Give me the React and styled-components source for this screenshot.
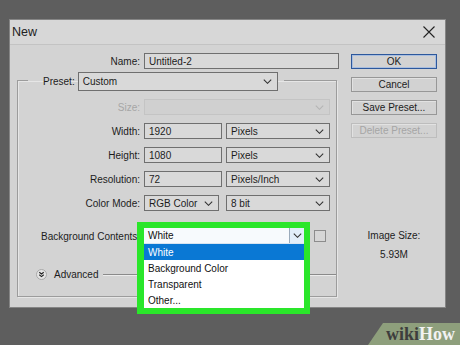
import styled, { createGlobalStyle } from "styled-components";

const GlobalStyle = createGlobalStyle`
  html, body {
    margin: 0;
    padding: 0;
  }
  body {
    font-family: "Liberation Sans", Arial, sans-serif;
  }
`;

const Desktop = styled.div`
  position: relative;
  width: 460px;
  height: 345px;
  box-sizing: border-box;
  padding: 19px 0 0 9px;
  background: #5e5e5e;
  overflow: hidden;
`;

const Dialog = styled.div`
  width: 437px;
  height: 289px;
  box-sizing: border-box;
  display: flex;
  flex-direction: column;
  background: #d3d3d3;
  border: 1px solid #858585;
  color: #1c1c1c;
  font-size: 10px;
`;

const TitleBar = styled.div`
  height: 25px;
  box-sizing: border-box;
  display: flex;
  align-items: center;
  justify-content: space-between;
  padding: 0 10px 0 2px;
  background: #d7d7d7;
  border-bottom: 1px solid #c3c3c3;
  font-size: 12.5px;
  color: #222;
`;

const Body = styled.div`
  display: flex;
  gap: 13px;
  padding: 8px 8px 0 7px;
`;

const LeftCol = styled.div`
  width: 321px;
  display: flex;
  flex-direction: column;
`;

const RightCol = styled.div`
  width: 86px;
  display: flex;
  flex-direction: column;
  gap: 8px;
  padding-top: 1px;
`;

const Row = styled.div`
  display: grid;
  grid-template-columns: ${({ $label }) => $label}px 1fr;
  column-gap: 4px;
  align-items: center;
  height: 16px;
  margin-top: ${({ $mt }) => $mt || 0}px;
`;

const Label = styled.div`
  text-align: right;
  white-space: nowrap;
  color: ${({ $disabled }) => ($disabled ? "#a6a6a6" : "#1c1c1c")};
`;

const Controls = styled.div`
  display: flex;
  align-items: center;
  gap: ${({ $gap }) => $gap || 4}px;
`;

const Field = styled.div`
  width: ${({ $w }) => $w}px;
  height: ${({ $h }) => $h || 16}px;
  box-sizing: border-box;
  display: flex;
  align-items: center;
  justify-content: space-between;
  padding: 0 5px 0 4px;
  background: ${({ $disabled }) => ($disabled ? "#d0d0d0" : "#d9d9d9")};
  border: 1px solid ${({ $disabled }) => ($disabled ? "#c4c4c4" : "#6f6f6f")};
  color: #1c1c1c;
  white-space: nowrap;
`;

const Group = styled.fieldset`
  width: 320px;
  box-sizing: border-box;
  margin: 0;
  min-width: 0;
  padding: 8px 0 15px 0;
  border: 1px solid #9c9c9c;
  box-shadow: inset 1px 1px 0 #e6e6e6, 1px 1px 0 #e6e6e6;
`;

const Legend = styled.legend`
  margin-left: 10px;
  padding: 3px 6px 0 15px;
  display: flex;
  align-items: center;
  gap: 3px;
`;

const Slot = styled.div`
  position: relative;
  width: 160px;
  height: 16px;
`;

const Callout = styled.div`
  position: absolute;
  z-index: 2;
  top: -6px;
  left: -7px;
  width: 173px;
  box-sizing: border-box;
  border-style: solid;
  border-color: #2ae62a;
  border-width: 6px 6px 6px 7px;
  background: #ffffff;
`;

const SelectBox = styled.div`
  height: 16px;
  box-sizing: border-box;
  display: flex;
  align-items: center;
  justify-content: space-between;
  padding-left: 4px;
  background: #f7fafd;
  border-bottom: 1px solid #d8e4f0;
  color: #111;
`;

const SelectArrow = styled.div`
  width: 14px;
  height: 15px;
  display: flex;
  align-items: center;
  justify-content: center;
  background: #e2eefa;
  border-left: 1px solid #9aaabb;
`;

const Option = styled.div`
  height: 16px;
  display: flex;
  align-items: center;
  padding-left: 4px;
  background: ${({ $active }) => ($active ? "#0a78d4" : "transparent")};
  color: ${({ $active }) => ($active ? "#ffffff" : "#111")};
`;

const Swatch = styled.div`
  width: 12px;
  height: 12px;
  box-sizing: border-box;
  margin-left: 6px;
  border: 1px solid #8c8c8c;
  background: #d6d6d6;
`;

const AdvancedRow = styled.div`
  width: 318px;
  box-sizing: border-box;
  display: grid;
  grid-template-columns: 11px auto 1fr;
  column-gap: 7px;
  align-items: center;
  height: 14px;
  margin-top: 23px;
  padding-left: 18px;
`;

const Rule = styled.div`
  height: 1px;
  margin-left: -2px;
  background: #8a8a8a;
  box-shadow: 0 1px 0 #ececec;
`;

const Button = styled.div`
  height: 15px;
  box-sizing: border-box;
  display: flex;
  align-items: center;
  justify-content: center;
  background: #d2d2d2;
  border: 1px solid ${({ $primary, $disabled }) =>
    $primary ? "#2d589c" : $disabled ? "#bdbdbd" : "#979797"};
  box-shadow: ${({ $primary }) =>
    $primary ? "inset 0 0 0 1px #a9bedf" : "inset 1px 1px 0 #e2e2e2"};
  color: ${({ $disabled }) => ($disabled ? "#a5a5a5" : "#1c1c1c")};
`;

const SizeInfo = styled.div`
  margin-top: 84px;
  display: flex;
  flex-direction: column;
  align-items: center;
  gap: 7px;
  line-height: 12px;
  color: #1c1c1c;
`;

const Badge = styled.div`
  position: absolute;
  right: 0;
  bottom: 0;
  width: 92px;
  height: 22px;
  box-sizing: border-box;
  padding: 1px 0 0 18px;
  background: #8e9f7c;
  clip-path: polygon(15px 0, 100% 0, 100% 100%, 0 100%);
  font-family: "Liberation Serif", "Times New Roman", serif;
  font-weight: bold;
  font-size: 18px;
  line-height: 21px;
  white-space: nowrap;
`;

const Wiki = styled.span`
  color: #3d3d3d;
`;

const How = styled.span`
  color: #f2f2f2;
`;

function Chevron({ color = "#333" }) {
  return (
    <svg width="9" height="5" viewBox="0 0 9 5">
      <path d="M0.8 0.7 L4.5 4.3 L8.2 0.7" fill="none" stroke={color} strokeWidth="1.1" />
    </svg>
  );
}

function Dropdown({ w, value, disabled, h }) {
  return (
    <Field $w={w} $h={h} $disabled={disabled}>
      <span>{value}</span>
      <Chevron color={disabled ? "#b5b5b5" : "#333"} />
    </Field>
  );
}

function CloseIcon() {
  return (
    <svg width="12" height="12" viewBox="0 0 12 12">
      <path d="M0.5 0.5 L11.5 11.5 M11.5 0.5 L0.5 11.5" stroke="#222" strokeWidth="1.1" />
    </svg>
  );
}

function AdvancedIcon() {
  return (
    <svg width="11" height="11" viewBox="0 0 11 11">
      <circle cx="5.5" cy="5.5" r="5" fill="#e4e4e4" stroke="#a8a8a8" />
      <path d="M3.3 3.2 L5.5 5 L7.7 3.2 M3.3 5.8 L5.5 7.6 L7.7 5.8" fill="none" stroke="#222" strokeWidth="1.1" />
    </svg>
  );
}

export default function App() {
  return (
    <>
      <GlobalStyle />
      <Desktop>
        <Dialog>
          <TitleBar>
            <span>New</span>
            <CloseIcon />
          </TitleBar>
          <Body>
            <LeftCol>
              <Row $label={123}>
                <Label>Name:</Label>
                <Field $w={195}>Untitled-2</Field>
              </Row>
              <Group>
                <Legend>
                  <Label>Preset:</Label>
                  <Dropdown w={200} h={19} value="Custom" />
                </Legend>
                <Row $label={122}>
                  <Label $disabled>Size:</Label>
                  <Controls>
                    <Dropdown w={186} value="" disabled />
                  </Controls>
                </Row>
                <Row $label={122} $mt={8}>
                  <Label>Width:</Label>
                  <Controls>
                    <Field $w={78}>1920</Field>
                    <Dropdown w={104} value="Pixels" />
                  </Controls>
                </Row>
                <Row $label={122} $mt={8}>
                  <Label>Height:</Label>
                  <Controls>
                    <Field $w={78}>1080</Field>
                    <Dropdown w={104} value="Pixels" />
                  </Controls>
                </Row>
                <Row $label={122} $mt={8}>
                  <Label>Resolution:</Label>
                  <Controls>
                    <Field $w={78}>72</Field>
                    <Dropdown w={104} value="Pixels/Inch" />
                  </Controls>
                </Row>
                <Row $label={122} $mt={8}>
                  <Label>Color Mode:</Label>
                  <Controls $gap={7}>
                    <Dropdown w={75} value="RGB Color" />
                    <Dropdown w={104} value="8 bit" />
                  </Controls>
                </Row>
                <Row $label={122} $mt={17}>
                  <Label>Background Contents:</Label>
                  <Controls $gap={0}>
                    <Slot>
                      <Callout>
                        <SelectBox>
                          <span>White</span>
                          <SelectArrow>
                            <Chevron color="#333" />
                          </SelectArrow>
                        </SelectBox>
                        <Option $active>White</Option>
                        <Option>Background Color</Option>
                        <Option>Transparent</Option>
                        <Option>Other...</Option>
                      </Callout>
                    </Slot>
                    <Swatch />
                  </Controls>
                </Row>
                <AdvancedRow>
                  <AdvancedIcon />
                  <span>Advanced</span>
                  <Rule />
                </AdvancedRow>
              </Group>
            </LeftCol>
            <RightCol>
              <Button $primary>OK</Button>
              <Button>Cancel</Button>
              <Button>Save Preset...</Button>
              <Button $disabled>Delete Preset...</Button>
              <SizeInfo>
                <span>Image Size:</span>
                <span>5.93M</span>
              </SizeInfo>
            </RightCol>
          </Body>
        </Dialog>
        <Badge>
          <Wiki>wiki</Wiki>
          <How>How</How>
        </Badge>
      </Desktop>
    </>
  );
}
